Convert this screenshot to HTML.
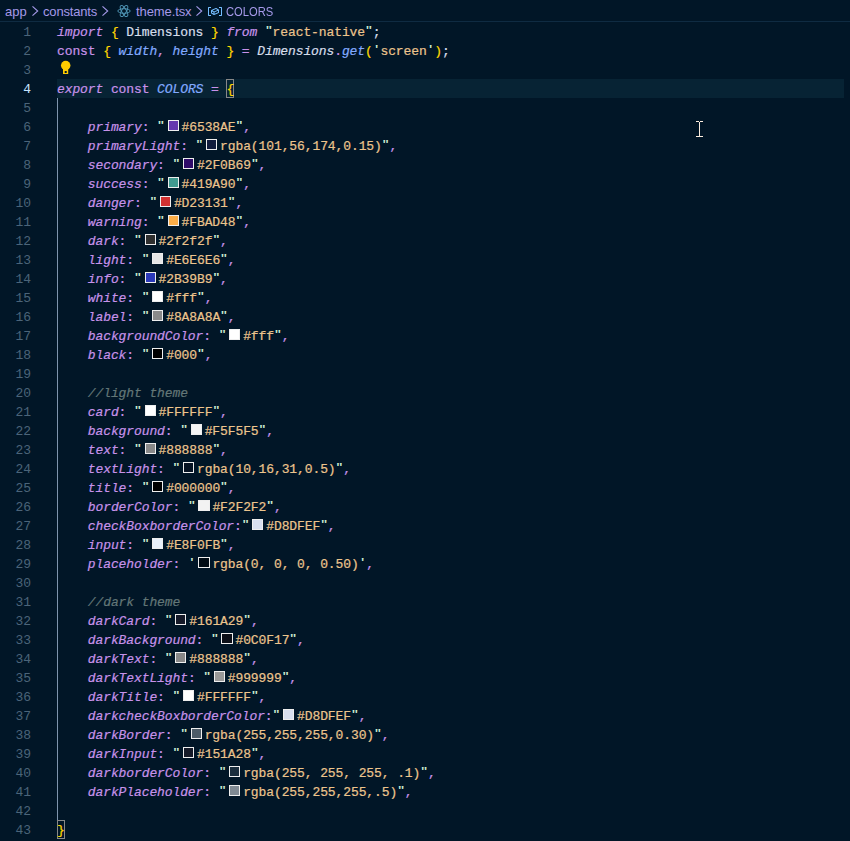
<!DOCTYPE html>
<html><head><meta charset="utf-8"><style>
html,body{margin:0;padding:0;}
body{width:850px;height:841px;overflow:hidden;background:#011627;position:relative;font-family:"Liberation Mono",monospace;}
.crumb{position:absolute;left:0;top:0;width:850px;height:21px;font-family:"Liberation Sans",sans-serif;font-size:13px;color:#a599e9;}
.crumb span.t{position:absolute;top:4px;white-space:pre;}
.crumb svg{position:absolute;}
.sep{position:absolute;left:0;top:21px;width:850px;height:1px;background:#0f2b42;}
.hl{position:absolute;left:57px;top:79px;width:787px;height:19px;background:#072334;}
.guide{position:absolute;left:57px;top:98px;width:1px;height:722px;background:#7e94ac;}
.ln{position:absolute;left:57px;height:19px;line-height:19px;white-space:pre;font-size:13px;letter-spacing:-0.103px;color:#d6deeb;-webkit-text-stroke:0.2px currentColor;}
.num{position:absolute;left:0;width:31px;text-align:right;height:19px;line-height:19px;font-size:13px;letter-spacing:-0.103px;color:#4b6479;}
.num.act{color:#c5e4fd;}
.k{color:#c792ea;font-style:italic;}
.st{color:#c792ea;}
.op{color:#c792ea;}
.b{color:#ffd700;}
.v{color:#d6deeb;}
.vi{color:#82aaff;font-style:italic;}
.wi{color:#d6deeb;font-style:italic;}
.fn{color:#82aaff;font-style:italic;}
.q{color:#d9f5dd;}
.s{color:#ecc48d;}
.key{color:#c792ea;font-style:italic;}
.c{color:#637777;font-style:italic;}
.p{color:#d6deeb;}
.cm{color:#c792ea;}
.q{display:inline-block;transform:translateY(-0.5px) scaleY(0.72);transform-origin:50% 30%;}
.sw{display:inline-block;box-sizing:border-box;width:11.2px;height:11.2px;border:1.4px solid #eeeeee;margin:0 2.8px;vertical-align:top;margin-top:2px;}
.bmbox{position:absolute;box-sizing:border-box;border:1px solid #888888;width:8px;height:19px;}
.bulb{position:absolute;left:60px;top:60px;}
.cursor{position:absolute;left:696px;top:121px;filter:drop-shadow(0 0 0.6px #000);}
</style></head><body>
<div class="crumb">
<span class="t" style="left:5px">app</span>
<span class="t" style="left:43px;letter-spacing:-0.17px">constants</span>
<span class="t" style="left:136px;letter-spacing:-0.1px">theme.tsx</span>
<span class="t" style="left:226px;transform:scaleX(0.86);transform-origin:0 0">COLORS</span>
<svg style="left:31px;top:5px" width="8" height="12" viewBox="0 0 8 12"><path d="M1.5 1.3L6.7 6 1.5 10.7" fill="none" stroke="#a599e9" stroke-width="1.1"/></svg>
<svg style="left:101px;top:5px" width="8" height="12" viewBox="0 0 8 12"><path d="M1.5 1.3L6.7 6 1.5 10.7" fill="none" stroke="#a599e9" stroke-width="1.1"/></svg>
<svg style="left:195px;top:5px" width="8" height="12" viewBox="0 0 8 12"><path d="M1.5 1.3L6.7 6 1.5 10.7" fill="none" stroke="#a599e9" stroke-width="1.1"/></svg>
<div style="position:absolute;left:117px;top:4px"><svg class="react" width="14" height="14" viewBox="0 0 14 14"><g fill="none" stroke="#4d92b2" stroke-width="1"><ellipse cx="7" cy="7" rx="6.2" ry="2.3"/><ellipse cx="7" cy="7" rx="6.2" ry="2.3" transform="rotate(60 7 7)"/><ellipse cx="7" cy="7" rx="6.2" ry="2.3" transform="rotate(120 7 7)"/></g></svg></div>
<div style="position:absolute;left:207px;top:3px"><svg class="varic" width="16" height="16" viewBox="0 0 16 16"><path fill="#75beff" d="M2 5h2V4H1.5l-.5.5v8l.5.5H4v-1H2V5zm12.5-1H12v1h2v7h-2v1h2.5l.5-.5v-8l-.5-.5zm-2.740 2.570L12 7v2.510l-.3.450-4.500 2h-.460l-2.500-1.500-.240-.430v-2.500l.3-.460 4.500-2h.460l2.500 1.500zM5 9.710l1.500.9V9.280L5 8.380v1.330zm.580-2.150l1.450.870 3.390-1.500-1.450-.870-3.390 1.500zm1.950 3.170l3.500-1.560v-1.400l-3.500 1.550v1.410z"/></svg></div>
</div>
<div class="sep"></div>
<div class="hl"></div>
<div class="guide"></div>
<div class="bmbox" style="left:226px;top:79px"></div>
<div class="bmbox" style="left:57px;top:820px"></div>
<div class="num" style="top:23px">1</div><div class="num" style="top:42px">2</div><div class="num" style="top:61px">3</div><div class="num act" style="top:80px">4</div><div class="num" style="top:99px">5</div><div class="num" style="top:118px">6</div><div class="num" style="top:137px">7</div><div class="num" style="top:156px">8</div><div class="num" style="top:175px">9</div><div class="num" style="top:194px">10</div><div class="num" style="top:213px">11</div><div class="num" style="top:232px">12</div><div class="num" style="top:251px">13</div><div class="num" style="top:270px">14</div><div class="num" style="top:289px">15</div><div class="num" style="top:308px">16</div><div class="num" style="top:327px">17</div><div class="num" style="top:346px">18</div><div class="num" style="top:365px">19</div><div class="num" style="top:384px">20</div><div class="num" style="top:403px">21</div><div class="num" style="top:422px">22</div><div class="num" style="top:441px">23</div><div class="num" style="top:460px">24</div><div class="num" style="top:479px">25</div><div class="num" style="top:498px">26</div><div class="num" style="top:517px">27</div><div class="num" style="top:536px">28</div><div class="num" style="top:555px">29</div><div class="num" style="top:574px">30</div><div class="num" style="top:593px">31</div><div class="num" style="top:612px">32</div><div class="num" style="top:631px">33</div><div class="num" style="top:650px">34</div><div class="num" style="top:669px">35</div><div class="num" style="top:688px">36</div><div class="num" style="top:707px">37</div><div class="num" style="top:726px">38</div><div class="num" style="top:745px">39</div><div class="num" style="top:764px">40</div><div class="num" style="top:783px">41</div><div class="num" style="top:802px">42</div><div class="num" style="top:821px">43</div>
<div class="ln" style="top:23px"><span class="k">import</span> <span class="b">{</span><span class="v"> Dimensions </span><span class="b">}</span> <span class="k">from</span> <span class="q">&quot;</span><span class="s">react-native</span><span class="q">&quot;</span><span class="v">;</span></div><div class="ln" style="top:42px"><span class="st">const</span> <span class="b">{</span> <span class="vi">width</span><span class="cm">,</span> <span class="vi">height</span> <span class="b">}</span> <span class="op">=</span> <span class="wi">Dimensions</span><span class="op">.</span><span class="fn">get</span><span class="b">(</span><span class="q">&#x27;</span><span class="s">screen</span><span class="q">&#x27;</span><span class="b">)</span><span class="v">;</span></div><div class="ln" style="top:61px"></div><div class="ln act" style="top:80px"><span class="k">export</span> <span class="st">const</span> <span class="vi">COLORS</span> <span class="op">=</span> <span class="b">{</span></div><div class="ln" style="top:99px"></div><div class="ln" style="top:118px">    <span class="key">primary</span><span class="cm">:</span> <span class="q">&quot;</span><i class="sw" style="background:#6538ae"></i><span class="s">#6538AE</span><span class="q">&quot;</span><span class="cm">,</span></div><div class="ln" style="top:137px">    <span class="key">primaryLight</span><span class="cm">:</span> <span class="q">&quot;</span><i class="sw" style="background:#101b3b"></i><span class="s">rgba(101,56,174,0.15)</span><span class="q">&quot;</span><span class="cm">,</span></div><div class="ln" style="top:156px">    <span class="key">secondary</span><span class="cm">:</span> <span class="q">&quot;</span><i class="sw" style="background:#2f0b69"></i><span class="s">#2F0B69</span><span class="q">&quot;</span><span class="cm">,</span></div><div class="ln" style="top:175px">    <span class="key">success</span><span class="cm">:</span> <span class="q">&quot;</span><i class="sw" style="background:#419a90"></i><span class="s">#419A90</span><span class="q">&quot;</span><span class="cm">,</span></div><div class="ln" style="top:194px">    <span class="key">danger</span><span class="cm">:</span> <span class="q">&quot;</span><i class="sw" style="background:#d23131"></i><span class="s">#D23131</span><span class="q">&quot;</span><span class="cm">,</span></div><div class="ln" style="top:213px">    <span class="key">warning</span><span class="cm">:</span> <span class="q">&quot;</span><i class="sw" style="background:#fbad48"></i><span class="s">#FBAD48</span><span class="q">&quot;</span><span class="cm">,</span></div><div class="ln" style="top:232px">    <span class="key">dark</span><span class="cm">:</span> <span class="q">&quot;</span><i class="sw" style="background:#2f2f2f"></i><span class="s">#2f2f2f</span><span class="q">&quot;</span><span class="cm">,</span></div><div class="ln" style="top:251px">    <span class="key">light</span><span class="cm">:</span> <span class="q">&quot;</span><i class="sw" style="background:#e6e6e6"></i><span class="s">#E6E6E6</span><span class="q">&quot;</span><span class="cm">,</span></div><div class="ln" style="top:270px">    <span class="key">info</span><span class="cm">:</span> <span class="q">&quot;</span><i class="sw" style="background:#2b39b9"></i><span class="s">#2B39B9</span><span class="q">&quot;</span><span class="cm">,</span></div><div class="ln" style="top:289px">    <span class="key">white</span><span class="cm">:</span> <span class="q">&quot;</span><i class="sw" style="background:#ffffff"></i><span class="s">#fff</span><span class="q">&quot;</span><span class="cm">,</span></div><div class="ln" style="top:308px">    <span class="key">label</span><span class="cm">:</span> <span class="q">&quot;</span><i class="sw" style="background:#8a8a8a"></i><span class="s">#8A8A8A</span><span class="q">&quot;</span><span class="cm">,</span></div><div class="ln" style="top:327px">    <span class="key">backgroundColor</span><span class="cm">:</span> <span class="q">&quot;</span><i class="sw" style="background:#ffffff"></i><span class="s">#fff</span><span class="q">&quot;</span><span class="cm">,</span></div><div class="ln" style="top:346px">    <span class="key">black</span><span class="cm">:</span> <span class="q">&quot;</span><i class="sw" style="background:#000000"></i><span class="s">#000</span><span class="q">&quot;</span><span class="cm">,</span></div><div class="ln" style="top:365px"></div><div class="ln" style="top:384px">    <span class="c">//light theme</span></div><div class="ln" style="top:403px">    <span class="key">card</span><span class="cm">:</span> <span class="q">&quot;</span><i class="sw" style="background:#ffffff"></i><span class="s">#FFFFFF</span><span class="q">&quot;</span><span class="cm">,</span></div><div class="ln" style="top:422px">    <span class="key">background</span><span class="cm">:</span> <span class="q">&quot;</span><i class="sw" style="background:#f5f5f5"></i><span class="s">#F5F5F5</span><span class="q">&quot;</span><span class="cm">,</span></div><div class="ln" style="top:441px">    <span class="key">text</span><span class="cm">:</span> <span class="q">&quot;</span><i class="sw" style="background:#888888"></i><span class="s">#888888</span><span class="q">&quot;</span><span class="cm">,</span></div><div class="ln" style="top:460px">    <span class="key">textLight</span><span class="cm">:</span> <span class="q">&quot;</span><i class="sw" style="background:#061323"></i><span class="s">rgba(10,16,31,0.5)</span><span class="q">&quot;</span><span class="cm">,</span></div><div class="ln" style="top:479px">    <span class="key">title</span><span class="cm">:</span> <span class="q">&quot;</span><i class="sw" style="background:#000000"></i><span class="s">#000000</span><span class="q">&quot;</span><span class="cm">,</span></div><div class="ln" style="top:498px">    <span class="key">borderColor</span><span class="cm">:</span> <span class="q">&quot;</span><i class="sw" style="background:#f2f2f2"></i><span class="s">#F2F2F2</span><span class="q">&quot;</span><span class="cm">,</span></div><div class="ln" style="top:517px">    <span class="key">checkBoxborderColor</span><span class="cm">:</span><span class="q">&quot;</span><i class="sw" style="background:#d8dfef"></i><span class="s">#D8DFEF</span><span class="q">&quot;</span><span class="cm">,</span></div><div class="ln" style="top:536px">    <span class="key">input</span><span class="cm">:</span> <span class="q">&quot;</span><i class="sw" style="background:#e8f0fb"></i><span class="s">#E8F0FB</span><span class="q">&quot;</span><span class="cm">,</span></div><div class="ln" style="top:555px">    <span class="key">placeholder</span><span class="cm">:</span> <span class="q">&#x27;</span><i class="sw" style="background:#000b14"></i><span class="s">rgba(0, 0, 0, 0.50)</span><span class="q">&#x27;</span><span class="cm">,</span></div><div class="ln" style="top:574px"></div><div class="ln" style="top:593px">    <span class="c">//dark theme</span></div><div class="ln" style="top:612px">    <span class="key">darkCard</span><span class="cm">:</span> <span class="q">&quot;</span><i class="sw" style="background:#161a29"></i><span class="s">#161A29</span><span class="q">&quot;</span><span class="cm">,</span></div><div class="ln" style="top:631px">    <span class="key">darkBackground</span><span class="cm">:</span> <span class="q">&quot;</span><i class="sw" style="background:#0c0f17"></i><span class="s">#0C0F17</span><span class="q">&quot;</span><span class="cm">,</span></div><div class="ln" style="top:650px">    <span class="key">darkText</span><span class="cm">:</span> <span class="q">&quot;</span><i class="sw" style="background:#888888"></i><span class="s">#888888</span><span class="q">&quot;</span><span class="cm">,</span></div><div class="ln" style="top:669px">    <span class="key">darkTextLight</span><span class="cm">:</span> <span class="q">&quot;</span><i class="sw" style="background:#999999"></i><span class="s">#999999</span><span class="q">&quot;</span><span class="cm">,</span></div><div class="ln" style="top:688px">    <span class="key">darkTitle</span><span class="cm">:</span> <span class="q">&quot;</span><i class="sw" style="background:#ffffff"></i><span class="s">#FFFFFF</span><span class="q">&quot;</span><span class="cm">,</span></div><div class="ln" style="top:707px">    <span class="key">darkcheckBoxborderColor</span><span class="cm">:</span><span class="q">&quot;</span><i class="sw" style="background:#d8dfef"></i><span class="s">#D8DFEF</span><span class="q">&quot;</span><span class="cm">,</span></div><div class="ln" style="top:726px">    <span class="key">darkBorder</span><span class="cm">:</span> <span class="q">&quot;</span><i class="sw" style="background:#4d5c68"></i><span class="s">rgba(255,255,255,0.30)</span><span class="q">&quot;</span><span class="cm">,</span></div><div class="ln" style="top:745px">    <span class="key">darkInput</span><span class="cm">:</span> <span class="q">&quot;</span><i class="sw" style="background:#151a28"></i><span class="s">#151A28</span><span class="q">&quot;</span><span class="cm">,</span></div><div class="ln" style="top:764px">    <span class="key">darkborderColor</span><span class="cm">:</span> <span class="q">&quot;</span><i class="sw" style="background:#1a2d3d"></i><span class="s">rgba(255, 255, 255, .1)</span><span class="q">&quot;</span><span class="cm">,</span></div><div class="ln" style="top:783px">    <span class="key">darkPlaceholder</span><span class="cm">:</span> <span class="q">&quot;</span><i class="sw" style="background:#808a93"></i><span class="s">rgba(255,255,255,.5)</span><span class="q">&quot;</span><span class="cm">,</span></div><div class="ln" style="top:802px"></div><div class="ln" style="top:821px"><span class="b">}</span></div>
<svg class="bulb" width="12" height="16" viewBox="0 0 12 16"><circle cx="5.7" cy="5.5" r="4.75" fill="#ffcc00"/><rect x="3" y="8" width="5.2" height="6" fill="#ffcc00"/><rect x="4.7" y="11" width="2" height="2" fill="#011627"/></svg>
<svg class="cursor" width="9" height="18" viewBox="0 0 9 18"><g fill="#fdeee0"><rect x="0" y="0" width="3" height="1"/><rect x="4" y="0" width="3" height="1"/><rect x="3" y="1" width="1" height="15"/><rect x="0" y="15" width="3" height="1"/><rect x="4" y="15" width="3" height="1"/></g></svg>
</body></html>
